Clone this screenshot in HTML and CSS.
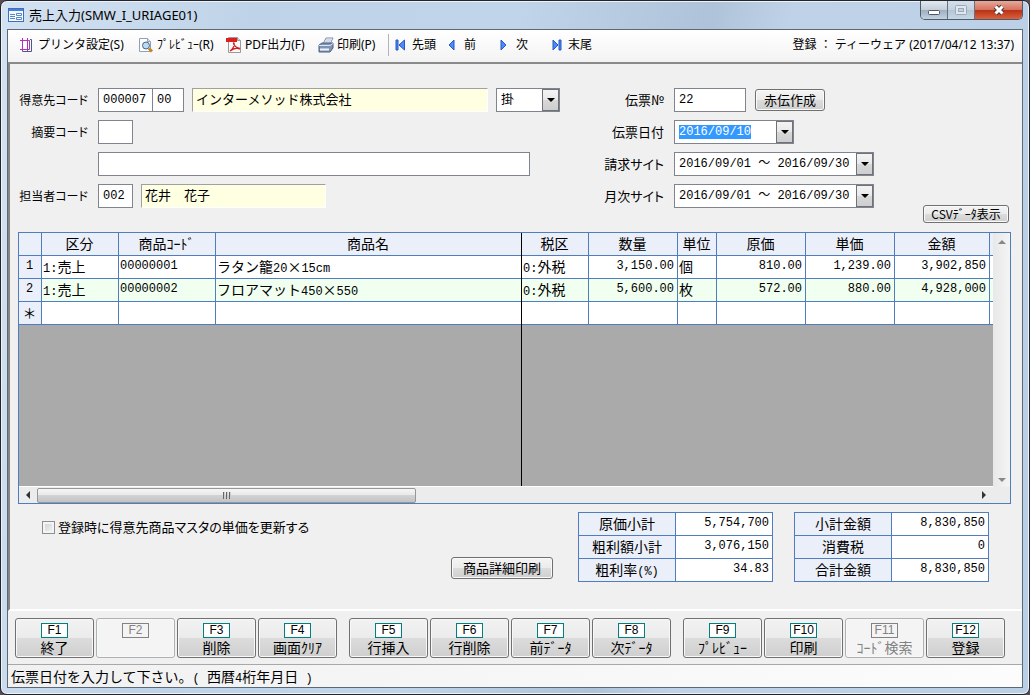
FILE: index.html
```html
<!DOCTYPE html>
<html lang="ja">
<head>
<meta charset="utf-8">
<title>売上入力(SMW_I_URIAGE01)</title>
<link rel="stylesheet" href="styles.css">
</head>
<body>
<div class="window">
  <header class="titlebar">
    <svg class="title-icon" width="16" height="14" viewBox="0 0 16 14">
      <rect x=".5" y=".5" width="15" height="13" fill="#f4f8ff" stroke="#3c6fc4"/>
      <rect x="1" y="1" width="14" height="2" fill="#4a80d8"/>
      <path d="M2 6.500h5M2 8.500h5M2 10.500h5" stroke="#5a86c4"/>
      <path d="M8.500 5.500h5v2h-5zM8.500 9.500h5v2h-5z" fill="#fff" stroke="#5a86c4"/>
    </svg>
    <h1 class="title">売上入力(SMW_I_URIAGE01)</h1>
    <div class="win-buttons">
      <button class="win-btn" type="button" aria-label="最小化"><svg width="14" height="14"><rect x="1.500" y="7.500" width="11" height="4" rx="1" fill="#fff" stroke="#4a5568"/></svg></button>
      <button class="win-btn win-max" type="button" aria-label="最大化" disabled><svg width="14" height="14"><rect x="1.500" y="2.500" width="11" height="9" rx="1" fill="#dfe6ee" stroke="#9aa9b9"/><rect x="4.500" y="5.500" width="5" height="3" fill="#c4d0dd" stroke="#9aa9b9"/></svg></button>
      <button class="win-btn win-close" type="button" aria-label="閉じる"><svg width="14" height="14"><path d="M3.500 3.500l7 7M10.500 3.500l-7 7" stroke="#53333a" stroke-width="5"/><path d="M3.500 3.500l7 7M10.500 3.500l-7 7" stroke="#fff" stroke-width="3"/></svg></button>
    </div>
  </header>

  <div class="client">
    <nav class="toolbar">
      <button class="tool tool-setup" type="button">
        <svg width="16" height="16"><path d="M3.500 2.500h7v11h-7z" fill="#fff"/><path d="M11 2.500h1.500v12H3.500V13" fill="none" stroke="#4a5a86"/><path d="M1 3.500h9.500v9H1M3.500 1v13M8.500 1v13" fill="none" stroke="#b030b8"/></svg>プリンタ設定(S)</button>
      <button class="tool tool-preview" type="button">
        <svg width="16" height="16"><path d="M1.500 1.500h8l3 3v10h-11z" fill="#fff" stroke="#8fa0b8"/><path d="M9.500 1.500v3h3" fill="#dbe4f0" stroke="#8fa0b8"/><circle cx="8" cy="8.500" r="3.500" fill="#b9dcf5" stroke="#4c647e"/><path d="M11 11.500l3 3" stroke="#c98222" stroke-width="3"/></svg>ﾌﾟﾚﾋﾞｭｰ(R)</button>
      <button class="tool tool-pdf" type="button">
        <svg width="16" height="16"><path d="M2.500.5h9l3 3v12h-12z" fill="#fafafa" stroke="#9a9a9a"/><path d="M0 1h11v4H0z" fill="#dc2020"/><path d="M11.500.5v3h3" fill="#ddd" stroke="#9a9a9a"/><path d="M4 14c3-2 5-6 4-8-1-1-1 3 5 6 1 0 1-1-1-1-3 0-5 .5-8 3z" fill="none" stroke="#d62020" stroke-width="1.300"/></svg>PDF出力(F)</button>
      <button class="tool tool-print" type="button">
        <svg width="16" height="16"><path d="M5 7l3-6h7l-3 6z" fill="#fff" stroke="#7a8db0"/><path d="M7 5h5M8 3h5" stroke="#a9b7cf"/><path d="M1 8l3-2h11v5l-3 4H1z" fill="#7f93b5" stroke="#4c5f84"/><path d="M1 8.500h11l3-2" fill="none" stroke="#dde6f4"/><path d="M2 11.500h9v2H2z" fill="#eef3fa"/></svg>印刷(P)</button>
      <span class="tool-sep"></span>
      <button class="tool nav tool-first" type="button"><svg width="12" height="12"><path d="M1 1h2v10H1zM9.500 1v10L4 6z" fill="#4c8af5" stroke="#2459c8"/></svg>先頭</button>
      <button class="tool nav tool-prev" type="button"><svg width="12" height="12"><path d="M7 1v10L2 6z" fill="#4c8af5" stroke="#2459c8"/></svg>前</button>
      <button class="tool nav tool-next" type="button"><svg width="12" height="12"><path d="M2 1v10l5-5z" fill="#4c8af5" stroke="#2459c8"/></svg>次</button>
      <button class="tool nav tool-last" type="button"><svg width="12" height="12"><path d="M8 1h2v10H8zM2 1v10l5-5z" fill="#4c8af5" stroke="#2459c8"/></svg>末尾</button>
      <span class="stamp">登録 ： ティーウェア (2017/04/12 13:37)</span>
    </nav>

    <main class="main">
      <section class="form">
        <div class="fields fields-left">
          <label for="customer">得意先コード</label>
          <div class="line">
            <input class="box w-code" id="customer" value="000007"><input class="box w-sub" aria-label="得意先枝番" value="00">
            <output class="name name-wide">インターメソッド株式会社</output>
            <div class="combo w-pay"><select aria-label="取引区分"><option>掛</option></select><span class="arrow"></span></div>
          </div>
          <label for="remark">摘要コード</label>
          <div class="line"><input class="box w-short" id="remark"></div>
          <span></span>
          <div class="line"><input class="box w-long" aria-label="摘要"></div>
          <label for="staff">担当者コード</label>
          <div class="line"><input class="box w-short" id="staff" value="002"><output class="name name-short">花井　花子</output></div>
        </div>
        <div class="fields fields-right">
          <label for="slip">伝票№</label>
          <div class="line"><input class="box w-slip" id="slip" value="22"><button class="btn btn-red" type="button">赤伝作成</button></div>
          <label for="date">伝票日付</label>
          <div class="line"><div class="combo w-date"><input id="date" value="2016/09/10"><button class="arrow" type="button" aria-label="カレンダー"></button></div></div>
          <label for="bill">請求サイト</label>
          <div class="line"><div class="combo w-range"><select id="bill"><option>2016/09/01 ～ 2016/09/30</option></select><span class="arrow"></span></div></div>
          <label for="month">月次サイト</label>
          <div class="line"><div class="combo w-range"><select id="month"><option>2016/09/01 ～ 2016/09/30</option></select><span class="arrow"></span></div></div>
        </div>
        <button class="btn btn-csv" type="button">CSVﾃﾞｰﾀ表示</button>
      </section>

      <section class="grid">
        <div class="grid-view">
          <table class="sheet">
            <colgroup><col class="c-no"><col class="c-kind"><col class="c-code"><col class="c-name"><col class="c-tax"><col class="c-qty"><col class="c-unit"><col class="c-money"><col class="c-money"><col class="c-total"><col></colgroup>
            <thead><tr><th></th><th>区分</th><th>商品ｺｰﾄﾞ</th><th>商品名</th><th>税区</th><th>数量</th><th>単位</th><th>原価</th><th>単価</th><th>金額</th><th></th></tr></thead>
            <tbody>
              <tr><th class="m">1</th><td><span class="m">1:</span>売上</td><td class="m">00000001</td><td>ラタン籠<span class="m">20</span>×<span class="m">15cm</span></td><td><span class="m">0:</span>外税</td><td class="m num">3,150.00</td><td>個</td><td class="m num">810.00</td><td class="m num">1,239.00</td><td class="m num">3,902,850</td><td></td></tr>
              <tr class="alt"><th class="m">2</th><td><span class="m">1:</span>売上</td><td class="m">00000002</td><td>フロアマット<span class="m">450</span>×<span class="m">550</span></td><td><span class="m">0:</span>外税</td><td class="m num">5,600.00</td><td>枚</td><td class="m num">572.00</td><td class="m num">880.00</td><td class="m num">4,928,000</td><td></td></tr>
              <tr><th>＊</th><td></td><td></td><td></td><td></td><td></td><td></td><td></td><td></td><td></td><td></td></tr>
            </tbody>
          </table>
          <span class="freeze"></span>
        </div>
        <div class="vscroll"><span class="tri up"></span><span class="tri down"></span></div>
        <div class="hscroll"><span class="tri left"></span><span class="thumb"><i></i><i></i><i></i></span><span class="tri right"></span></div>
      </section>

      <section class="summary">
        <label class="check"><input type="checkbox">登録時に得意先商品マスタの単価を更新する</label>
        <button class="btn btn-detail" type="button">商品詳細印刷</button>
        <table class="totals">
          <tr><th>原価小計</th><td>5,754,700</td></tr>
          <tr><th>粗利額小計</th><td>3,076,150</td></tr>
          <tr><th>粗利率<span class="m">(%)</span></th><td>34.83</td></tr>
        </table>
        <table class="totals">
          <tr><th>小計金額</th><td>8,830,850</td></tr>
          <tr><th>消費税</th><td>0</td></tr>
          <tr><th>合計金額</th><td>8,830,850</td></tr>
        </table>
      </section>
    </main>

    <footer class="fkeys">
      <div class="fgroup">
        <button class="fkey" type="button"><kbd>F1</kbd><span>終了</span></button>
        <button class="fkey" type="button" disabled><kbd>F2</kbd><span></span></button>
        <button class="fkey" type="button"><kbd>F3</kbd><span>削除</span></button>
        <button class="fkey" type="button"><kbd>F4</kbd><span>画面ｸﾘｱ</span></button>
      </div>
      <div class="fgroup">
        <button class="fkey" type="button"><kbd>F5</kbd><span>行挿入</span></button>
        <button class="fkey" type="button"><kbd>F6</kbd><span>行削除</span></button>
        <button class="fkey" type="button"><kbd>F7</kbd><span>前ﾃﾞｰﾀ</span></button>
        <button class="fkey" type="button"><kbd>F8</kbd><span>次ﾃﾞｰﾀ</span></button>
      </div>
      <div class="fgroup">
        <button class="fkey" type="button"><kbd>F9</kbd><span>ﾌﾟﾚﾋﾞｭｰ</span></button>
        <button class="fkey" type="button"><kbd>F10</kbd><span>印刷</span></button>
        <button class="fkey" type="button" disabled><kbd>F11</kbd><span>ｺｰﾄﾞ検索</span></button>
        <button class="fkey" type="button"><kbd>F12</kbd><span>登録</span></button>
      </div>
    </footer>
    <div class="status">伝票日付を入力して下さい。<span class="m">( </span>西暦<span class="m">4</span>桁年月日<span class="m"> )</span></div>
  </div>
</div>
<script src="script.js"></script>
</body>
</html>
```

FILE: styles.css
```css
* { box-sizing: border-box; }

body {
  margin: 0;
  font: 13px/16px "Noto Sans CJK JP", sans-serif;
  color: #000;
  background: #5a4a55;
}

button, input, select { font: inherit; color: inherit; margin: 0; border-radius: 0; }
button { padding: 0; white-space: nowrap; }
svg { display: block; flex: none; }

.m { font-family: "Liberation Mono", "Noto Sans CJK JP", monospace; font-size: 12px; }
span.m { line-height: 12px; }

/* window frame */
.window {
  display: flex;
  flex-direction: column;
  min-height: 100vh;
  padding: 0 6px 6px;
  border: 1px solid #23252b;
  border-radius: 7px;
  background: linear-gradient(100deg, #d3e2f2 0, #bfd3e8 22%, #c0d5e9 45%, #aec3d9 62%, #c0d2e8 69%, #b9cfe6 100%);
  box-shadow: inset 0 0 0 1px #eaf3fb;
}
.titlebar { display: flex; height: 28px; padding-left: 1px; }
.title-icon { margin-top: 7px; }
.title { margin: 5px 0 0 5px; font: 13px/18px "Noto Sans", "Noto Sans CJK JP", sans-serif; }
.win-buttons {
  display: flex;
  height: 19px;
  margin: 0 0 0 auto;
  border: 1px solid #4f5a68;
  border-top: 0;
  border-radius: 0 0 5px 5px;
  overflow: hidden;
}
.win-btn {
  display: grid;
  place-items: center;
  width: 27px;
  border: 0;
  border-right: 1px solid #65717f;
  background: linear-gradient(#e2e9f0, #c3ceda 50%, #9fadbd 50%, #c2d2e2);
}
.win-max { background: linear-gradient(#d3dfeb, #c3d1df 50%, #b4c4d5 50%, #c6d7e7); }
.win-close { width: 47px; border-right: 0; background: linear-gradient(#e7a99b, #d4705b 50%, #b93016 50%, #d9623c); }

.client {
  display: flex;
  flex-direction: column;
  flex: 1;
  border: 1px solid #5c6873;
  background: #f0f0f0;
}

/* toolbar */
.toolbar {
  display: flex;
  align-items: center;
  height: 34px;
  padding: 0 8px 2px 11px;
  border-bottom: 2px solid #8a8a8a;
  background: linear-gradient(#fff, #f3f3f3);
  font: 12px/16px "Noto Sans", "Noto Sans CJK JP", sans-serif;
}
.tool { display: flex; align-items: center; gap: 3px; border: 0; background: none; }
.nav { gap: 5px; }
.tool-setup { width: 119px; }
.tool-preview { width: 88px; }
.tool-pdf { width: 92px; }
.tool-print { width: 70px; }
.tool-sep { width: 1px; height: 22px; margin-right: 6px; background: #b4b4b4; }
.tool-first { width: 52px; }
.tool-prev { width: 52px; }
.tool-next { width: 52px; }
.stamp { margin-left: auto; white-space: nowrap; }

/* entry form */
.main {
  display: flex;
  flex-direction: column;
  flex: 1;
  padding: 24px 11px 27px 8px;
  border-left: 2px solid #858585;
  border-bottom: 2px solid #fff;
}
.form { display: flex; height: 135px; margin-bottom: 9px; }
.fields { display: grid; grid-auto-rows: 24px; row-gap: 8px; column-gap: 10px; align-content: start; }
.fields > label { align-self: center; text-align: right; white-space: nowrap; font-feature-settings: "palt"; }
.fields-left { grid-template-columns: 70px 462px; margin-right: 40px; }
.fields-left > label { font-size: 12px; }
.fields-right { grid-template-columns: 64px auto; }
.line { display: flex; }
.box, .combo { height: 24px; border: 1px solid #80848e; background: #fff; }
.box, .combo input, .combo select {
  padding: 0 4px;
  font: 12px/14px "Liberation Mono", "Noto Sans CJK JP", monospace;
}
.w-code { width: 55px; }
.w-sub { width: 32px; margin-left: -1px; }
.w-short { width: 35px; }
.w-long { width: 432px; }
.w-slip { width: 72px; }
.w-pay { width: 64px; }
.w-date { width: 120px; }
.w-range { width: 200px; }
.name {
  height: 24px;
  margin-left: 8px;
  padding: 2px 3px 0;
  border: 1px solid #fff;
  border-top-color: #a0a0a0;
  border-left-color: #a0a0a0;
  background: #ffffe1;
  font-size: 13px;
}
.name-wide { width: 296px; margin-right: 8px; }
.name-short { width: 185px; }
.combo { display: flex; position: relative; }
.combo input, .combo select { flex: 1; min-width: 0; border: 0; outline: 0; background: none; appearance: none; }
.combo select { padding-right: 18px; }
.combo.w-pay select { font-size: 13px; }
.arrow {
  display: grid;
  place-items: center;
  width: 17px;
  border: 1px solid #70727a;
  background: linear-gradient(#f4f4f4, #e8e8e8 50%, #d8d8d8 50%, #cecece);
}
.combo span.arrow { position: absolute; top: 0; right: 0; bottom: 0; pointer-events: none; }
.arrow::before { content: ""; border: 4px solid transparent; border-top-color: #000; border-bottom: 0; }
#date::selection { background: #3399ff; color: #fff; }

.btn {
  border: 1px solid #707070;
  border-radius: 3px;
  background: linear-gradient(#f4f4f4, #ebebeb 50%, #dcdcdc 50%, #cfcfcf);
  box-shadow: inset 0 0 0 1px #fafafa;
}
.btn-red { width: 70px; height: 22px; margin: 1px 0 0 9px; line-height: 18px; }
.btn-csv { width: 86px; height: 18px; margin: auto 2px 0 auto; font-size: 12px; line-height: 14px; }

/* detail grid */
.grid {
  display: grid;
  grid-template-columns: minmax(0, 1fr) 17px;
  grid-template-rows: 1fr 16px;
  flex: 1;
  border: 1px solid #4f7dbd;
  background: #ececec;
}
.grid-view { position: relative; overflow: hidden; background: #aaa; border-bottom: 1px solid #fff; }
.sheet, .totals { border-collapse: separate; border-spacing: 0; table-layout: fixed; }
.sheet { width: 100%; font-size: 14px; line-height: 20px; background: #fff; }
.sheet th, .sheet td {
  height: 23px;
  padding: 0 2px 2px 1px;
  border: solid #4f7dbd;
  border-width: 0 1px 1px 0;
  white-space: nowrap;
  overflow: hidden;
}
.sheet thead th { height: 23px; }
.sheet th { font-weight: 400; background: #ebeff9; }
.sheet tr > :last-child { border-right: 0; }
.sheet .alt td { background: #f0fff0; }
.sheet .m { font-size: 12px; }
.sheet .num { text-align: right; padding-right: 3px; }
.c-no { width: 23px; }
.c-kind { width: 77px; }
.c-code { width: 97px; }
.c-name { width: 306px; }
.c-tax { width: 67px; }
.c-qty { width: 89px; }
.c-unit { width: 39px; }
.c-money { width: 89px; }
.c-total { width: 95px; }
.freeze { position: absolute; top: 0; bottom: 0; left: 502px; width: 1px; background: #000; }
.vscroll { display: flex; flex-direction: column; justify-content: space-between; align-items: center; padding: 7px 0 5px; background: linear-gradient(90deg, #e8e8e8, #f4f4f4); }
.hscroll { display: flex; align-items: center; height: 16px; padding: 0 7px; grid-column: 1; }
.thumb {
  display: flex;
  justify-content: center;
  align-items: center;
  gap: 1px;
  width: 379px;
  height: 15px;
  margin: 0 auto 0 7px;
  border: 1px solid #979797;
  border-radius: 2px;
  background: linear-gradient(#f5f5f5, #e8e8e8 50%, #d2d2d2 50%, #c4c4c4);
}
.thumb i { width: 2px; height: 7px; background: #666; border-right: 1px solid #ccc; }
.tri { border: 4px solid transparent; }
.up { border-bottom-color: #888; border-top: 0; }
.down { border-top-color: #888; border-bottom: 0; }
.left { border-right-color: #333; border-left: 0; }
.right { border-left-color: #333; border-right: 0; }

/* totals */
.summary { display: flex; align-items: flex-start; margin-top: 8px; padding-right: 22px; }
.check { display: flex; align-items: center; gap: 3px; margin: 7px 0 0 24px; white-space: nowrap; font-feature-settings: "palt"; }
.check input {
  width: 13px;
  height: 13px;
  appearance: none;
  border: 1px solid #8e8f8f;
  background: linear-gradient(135deg, #cbd0d6, #f6f6f6);
  box-shadow: inset 0 0 0 2px #f4f4f4;
}
.btn-detail { width: 102px; height: 22px; margin: 45px 25px 0 auto; line-height: 18px; }
.totals { width: 195px; border: solid #4f7dbd; border-width: 1px 0 0 1px; font-size: 14px; line-height: 20px; }
.totals + .totals { margin-left: 21px; }
.totals th, .totals td { height: 23px; padding: 0 3px 2px; border: solid #4f7dbd; border-width: 0 1px 1px 0; }
.totals th { font-weight: 400; background: #ebeff9; }
.totals td { background: #fff; text-align: right; font-family: "Liberation Mono", monospace; font-size: 12px; }

/* function keys */
.fkeys { display: flex; gap: 12px; padding: 7px 7px 6px; border-bottom: 1px solid #a8a8a8; }
.fgroup { display: flex; gap: 2px; }
.fkey {
  display: flex;
  flex-direction: column;
  align-items: center;
  width: 79px;
  height: 40px;
  padding-top: 4px;
  border: 1px solid #707070;
  border-radius: 3px;
  background: linear-gradient(#f2f2f2, #ebebeb 50%, #dcdcdc 50%, #cfcfcf);
  box-shadow: inset 0 0 0 1px #f8f8f8;
  font-size: 14px;
  line-height: 18px;
}
.fkey kbd {
  width: 27px;
  height: 15px;
  border: 1px solid #008080;
  background: #fff;
  font: 12px/13px "Liberation Sans", sans-serif;
}
.fkey:disabled { color: #838383; border-color: #adb2b5; background: #f4f4f4; }
.fkey:disabled kbd { border-color: #838383; background: #f4f4f4; }

.status { height: 22px; padding: 0 3px; font-size: 14px; line-height: 22px; white-space: pre; background: linear-gradient(90deg, #f1f1f1, #fcfcfc); }
```

FILE: script.js
```js
const dateField = document.getElementById("date");
dateField.focus();
dateField.select();
```
